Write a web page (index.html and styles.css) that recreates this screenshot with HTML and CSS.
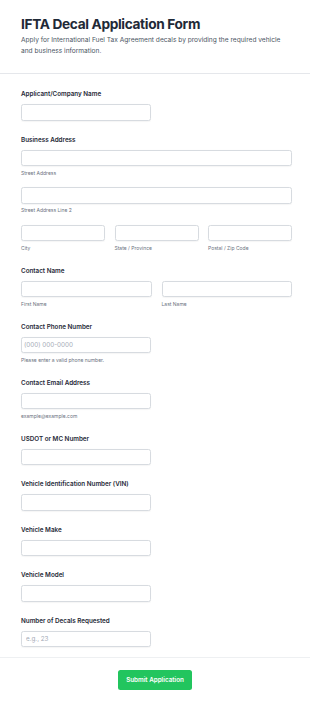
FILE: index.html
```html
<!DOCTYPE html>
<html lang="en">
<head>
<meta charset="utf-8">
<title>IFTA Decal Application Form</title>
<link rel="stylesheet" href="styles.css">
</head>
<body>
<div class="page">
  <header class="header">
    <h1 class="title">IFTA Decal Application Form</h1>
    <p class="subtitle">Apply for International Fuel Tax Agreement decals by providing the required vehicle and business information.</p>
  </header>
  <form class="form">
    <div class="field">
      <label class="label">Applicant/Company Name</label>
      <div class="half"><input class="input" type="text"></div>
    </div>

    <div class="field">
      <label class="label">Business Address</label>
      <div class="stack">
        <div class="sub">
          <input class="input" type="text">
          <span class="help">Street Address</span>
        </div>
        <div class="sub">
          <input class="input" type="text">
          <span class="help">Street Address Line 2</span>
        </div>
        <div class="row3">
          <div class="sub">
            <input class="input" type="text">
            <span class="help">City</span>
          </div>
          <div class="sub">
            <input class="input" type="text">
            <span class="help">State / Province</span>
          </div>
          <div class="sub">
            <input class="input" type="text">
            <span class="help">Postal / Zip Code</span>
          </div>
        </div>
      </div>
    </div>

    <div class="field">
      <label class="label">Contact Name</label>
      <div class="row2">
        <div class="sub">
          <input class="input" type="text">
          <span class="help">First Name</span>
        </div>
        <div class="sub">
          <input class="input" type="text">
          <span class="help">Last Name</span>
        </div>
      </div>
    </div>

    <div class="field">
      <label class="label">Contact Phone Number</label>
      <div class="half sub">
        <input class="input input-tight" type="tel" placeholder="(000) 000-0000">
        <span class="help">Please enter a valid phone number.</span>
      </div>
    </div>

    <div class="field">
      <label class="label">Contact Email Address</label>
      <div class="half sub">
        <input class="input" type="email">
        <span class="help">example@example.com</span>
      </div>
    </div>

    <div class="field">
      <label class="label">USDOT or MC Number</label>
      <div class="half"><input class="input" type="text"></div>
    </div>

    <div class="field">
      <label class="label">Vehicle Identification Number (VIN)</label>
      <div class="half"><input class="input" type="text"></div>
    </div>

    <div class="field">
      <label class="label">Vehicle Make</label>
      <div class="half"><input class="input" type="text"></div>
    </div>

    <div class="field">
      <label class="label">Vehicle Model</label>
      <div class="half"><input class="input" type="text"></div>
    </div>

    <div class="field">
      <label class="label">Number of Decals Requested</label>
      <div class="half"><input class="input" type="number" placeholder="e.g., 23"></div>
    </div>
  </form>
  <div class="actions">
    <button class="submit" type="button">Submit Application</button>
  </div>
</div>
</body>
</html>
```

FILE: styles.css
```css
* {
  box-sizing: border-box;
}

html, body {
  margin: 0;
  padding: 0;
  background: #ffffff;
}

body {
  font-family: Inter, "Noto Sans", "Liberation Sans", sans-serif;
  color: #1f2937;
}

.page {
  width: 310px;
}

.header {
  padding: 15px 20px 16px 21px;
  border-bottom: 1px solid #e5e7eb;
}

.title {
  margin: 0;
  font-size: 13.7px;
  line-height: 18px;
  font-weight: 700;
  color: #1f2937;
  letter-spacing: -0.35px;
}

.subtitle {
  margin: 1.5px 0 0 0;
  font-size: 6.6px;
  line-height: 11px;
  color: #4b5563;
}

.form {
  display: flex;
  flex-direction: column;
  gap: 14px;
  padding: 15.8px 18px 10px 21px;
  border-bottom: 1px solid #eef0f2;
}

.field {
  display: flex;
  flex-direction: column;
}

.label {
  font-size: 6.3px;
  line-height: 10px;
  font-weight: 600;
  color: #1f2937;
  margin-bottom: 5px;
}

.half {
  width: 130px;
}

.stack {
  display: flex;
  flex-direction: column;
  gap: 10.5px;
}

.sub {
  display: flex;
  flex-direction: column;
}

.row3 {
  display: grid;
  grid-template-columns: 1fr 1fr 1fr;
  gap: 9.5px;
}

.row2 {
  display: grid;
  grid-template-columns: 1fr 1fr;
  gap: 10px;
}

.input {
  display: block;
  width: 100%;
  height: 16.5px;
  margin: 0;
  padding: 0 4px;
  border: 1px solid #d7dbe0;
  border-radius: 2.5px;
  background: #ffffff;
  font-family: inherit;
  font-size: 6.3px;
  color: #1f2937;
  outline: none;
  box-shadow: 0 0.5px 1px rgba(0, 0, 0, 0.04);
  -moz-appearance: textfield;
}

.input-tight {
  padding-left: 2px;
}

.input::placeholder {
  color: #a3aab5;
}

.input::-webkit-outer-spin-button,
.input::-webkit-inner-spin-button {
  -webkit-appearance: none;
  margin: 0;
}

.help {
  margin-top: 3.5px;
  font-size: 5px;
  line-height: 7px;
  color: #6b7280;
}

.actions {
  display: flex;
  justify-content: center;
  padding: 11.7px 0 16px;
}

.submit {
  width: 74px;
  height: 20px;
  padding: 0;
  border: none;
  border-radius: 2.5px;
  background: #22c55e;
  color: #ffffff;
  font-family: inherit;
  font-size: 6.3px;
  font-weight: 600;
  cursor: pointer;
}
```
